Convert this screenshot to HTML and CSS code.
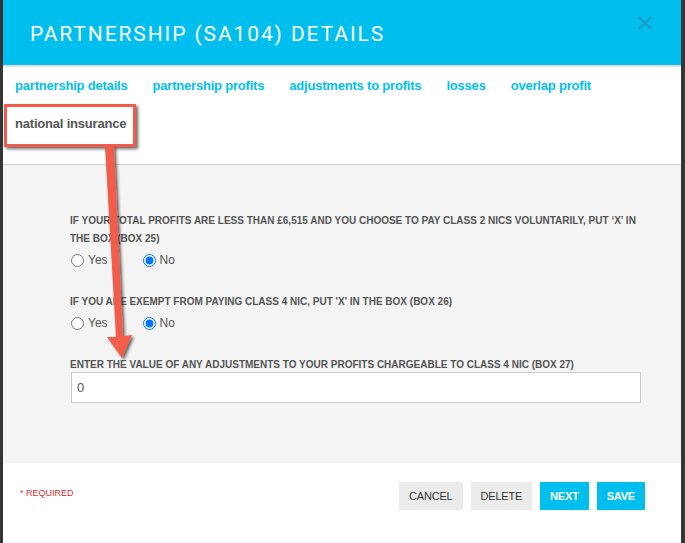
FILE: index.html
```html
<!DOCTYPE html>
<html lang="en">
<head>
  <meta charset="UTF-8">
  <title>Partnership (SA104) Details</title>
  <link rel="stylesheet" href="styles.css">
</head>
<body>
  <div class="modal">
    <header class="modal-header">
      <h1>PARTNERSHIP (SA104) DETAILS</h1>
      <span class="close">
        <svg width="16" height="16" viewBox="0 0 16 16"><path d="M2 2 L14 14 M14 2 L2 14" stroke="#1a9fc9" stroke-width="2.4" fill="none"/></svg>
      </span>
    </header>

    <nav class="tabs">
      <a class="tab">partnership details</a>
      <a class="tab">partnership profits</a>
      <a class="tab">adjustments to profits</a>
      <a class="tab">losses</a>
      <a class="tab">overlap profit</a>
      <a class="tab active">national insurance</a>
    </nav>

    <main class="modal-body">
      <div class="field">
        <label class="question">IF YOUR TOTAL PROFITS ARE LESS THAN £6,515 AND YOU CHOOSE TO PAY CLASS 2 NICS VOLUNTARILY, PUT ‘X’ IN THE BOX (BOX 25)</label>
        <div class="radios">
          <label class="radio"><input type="radio" name="box25"> Yes</label>
          <label class="radio"><input type="radio" name="box25" checked> No</label>
        </div>
      </div>

      <div class="field">
        <label class="question">IF YOU ARE EXEMPT FROM PAYING CLASS 4 NIC, PUT 'X' IN THE BOX (BOX 26)</label>
        <div class="radios">
          <label class="radio"><input type="radio" name="box26"> Yes</label>
          <label class="radio"><input type="radio" name="box26" checked> No</label>
        </div>
      </div>

      <div class="field">
        <label class="question">ENTER THE VALUE OF ANY ADJUSTMENTS TO YOUR PROFITS CHARGEABLE TO CLASS 4 NIC (BOX 27)</label>
        <input type="text" class="text-input" value="0">
      </div>
    </main>

    <footer class="modal-footer">
      <span class="required">* REQUIRED</span>
      <div class="buttons">
        <button class="btn">CANCEL</button>
        <button class="btn">DELETE</button>
        <button class="btn primary">NEXT</button>
        <button class="btn primary">SAVE</button>
      </div>
    </footer>

    <!-- annotation drawn over the screenshot -->
    <div class="callout"></div>
    <svg class="arrow" width="60" height="230" viewBox="0 0 60 230">
      <defs>
        <filter id="shadow" x="-50%" y="-10%" width="200%" height="120%">
          <feDropShadow dx="2" dy="2" stdDeviation="1.5" flood-color="#000" flood-opacity="0.6"/>
        </filter>
      </defs>
      <g filter="url(#shadow)" fill="#f15b4c">
        <polygon points="5,0 14,0 23,190 32,189 22,212 7,191 16,191"/>
      </g>
    </svg>
  </div>
</body>
</html>
```

FILE: styles.css
```css
body {
  margin: 0;
  background: #353535;
  font-family: "Liberation Sans", Arial, sans-serif;
}
.modal {
  position: relative;
  margin: 0 4px 0 3px;
  height: 543px;
  background: #fff;
  display: flex;
  flex-direction: column;
}
.modal-header {
  height: 65px;
  background: #00bfee;
  border-bottom: 2px solid #dedede;
  display: flex;
  align-items: center;
  justify-content: space-between;
  padding: 0 28px 0 27px;
}
.modal-header h1 {
  margin: 0;
  color: #fff;
  font-family: Roboto, sans-serif;
  font-weight: 400;
  font-size: 21px;
  letter-spacing: 1.9px;
  padding-top: 2px;
}
.close {
  display: flex;
  margin-top: -20px;
}
.tabs {
  display: flex;
  flex-wrap: wrap;
  padding: 0 12px;
  height: 97px;
  align-content: flex-start;
  border-bottom: 1px solid #cfcfcf;
}
.tab {
  color: #00bfee;
  font-weight: bold;
  font-size: 13px;
  letter-spacing: -0.2px;
  line-height: 38px;
  margin-right: 25px;
}
.tab.active {
  color: #555;
}
.modal-body {
  background: #f4f4f4;
  height: 298px;
  padding: 47px 41px 0 67px;
  box-sizing: border-box;
}
.field {
  margin-bottom: 26px;
}
.question {
  display: block;
  color: #555;
  font-weight: bold;
  font-size: 10px;
  line-height: 18px;
}
.radios {
  display: flex;
  gap: 34px;
  margin-top: 5px;
}
.radio {
  color: #555;
  font-size: 12px;
  display: flex;
  align-items: center;
  gap: 4px;
}
.radio input {
  margin: 0 0 0 1px;
  accent-color: #0075ff;
}
.text-input {
  display: block;
  width: 570px;
  height: 31px;
  box-sizing: border-box;
  border: 1px solid #cccccc;
  padding: 0 5px;
  color: #555;
  font-family: inherit;
  font-size: 13px;
  margin: -2px 0 0 1px;
}
.modal-footer {
  flex: 1;
  display: flex;
  justify-content: space-between;
  align-items: flex-start;
  padding: 19px 36px 0 17px;
}
.required {
  color: #d32f2f;
  font-size: 9px;
  margin-top: 6px;
}
.buttons {
  display: flex;
  gap: 8px;
}
.btn {
  border: none;
  background: #ebebeb;
  color: #333;
  font-family: inherit;
  font-size: 11px;
  letter-spacing: -0.2px;
  height: 28px;
  padding: 0 10px;
}
.btn.primary {
  background: #00bfee;
  color: #fff;
  font-weight: bold;
}
.callout {
  position: absolute;
  left: 1px;
  top: 104px;
  width: 126px;
  height: 37px;
  border: 3px solid #f15b4c;
  box-shadow: 2px 2px 3px rgba(0, 0, 0, 0.6);
}
.arrow {
  position: absolute;
  left: 97px;
  top: 146px;
}
```
